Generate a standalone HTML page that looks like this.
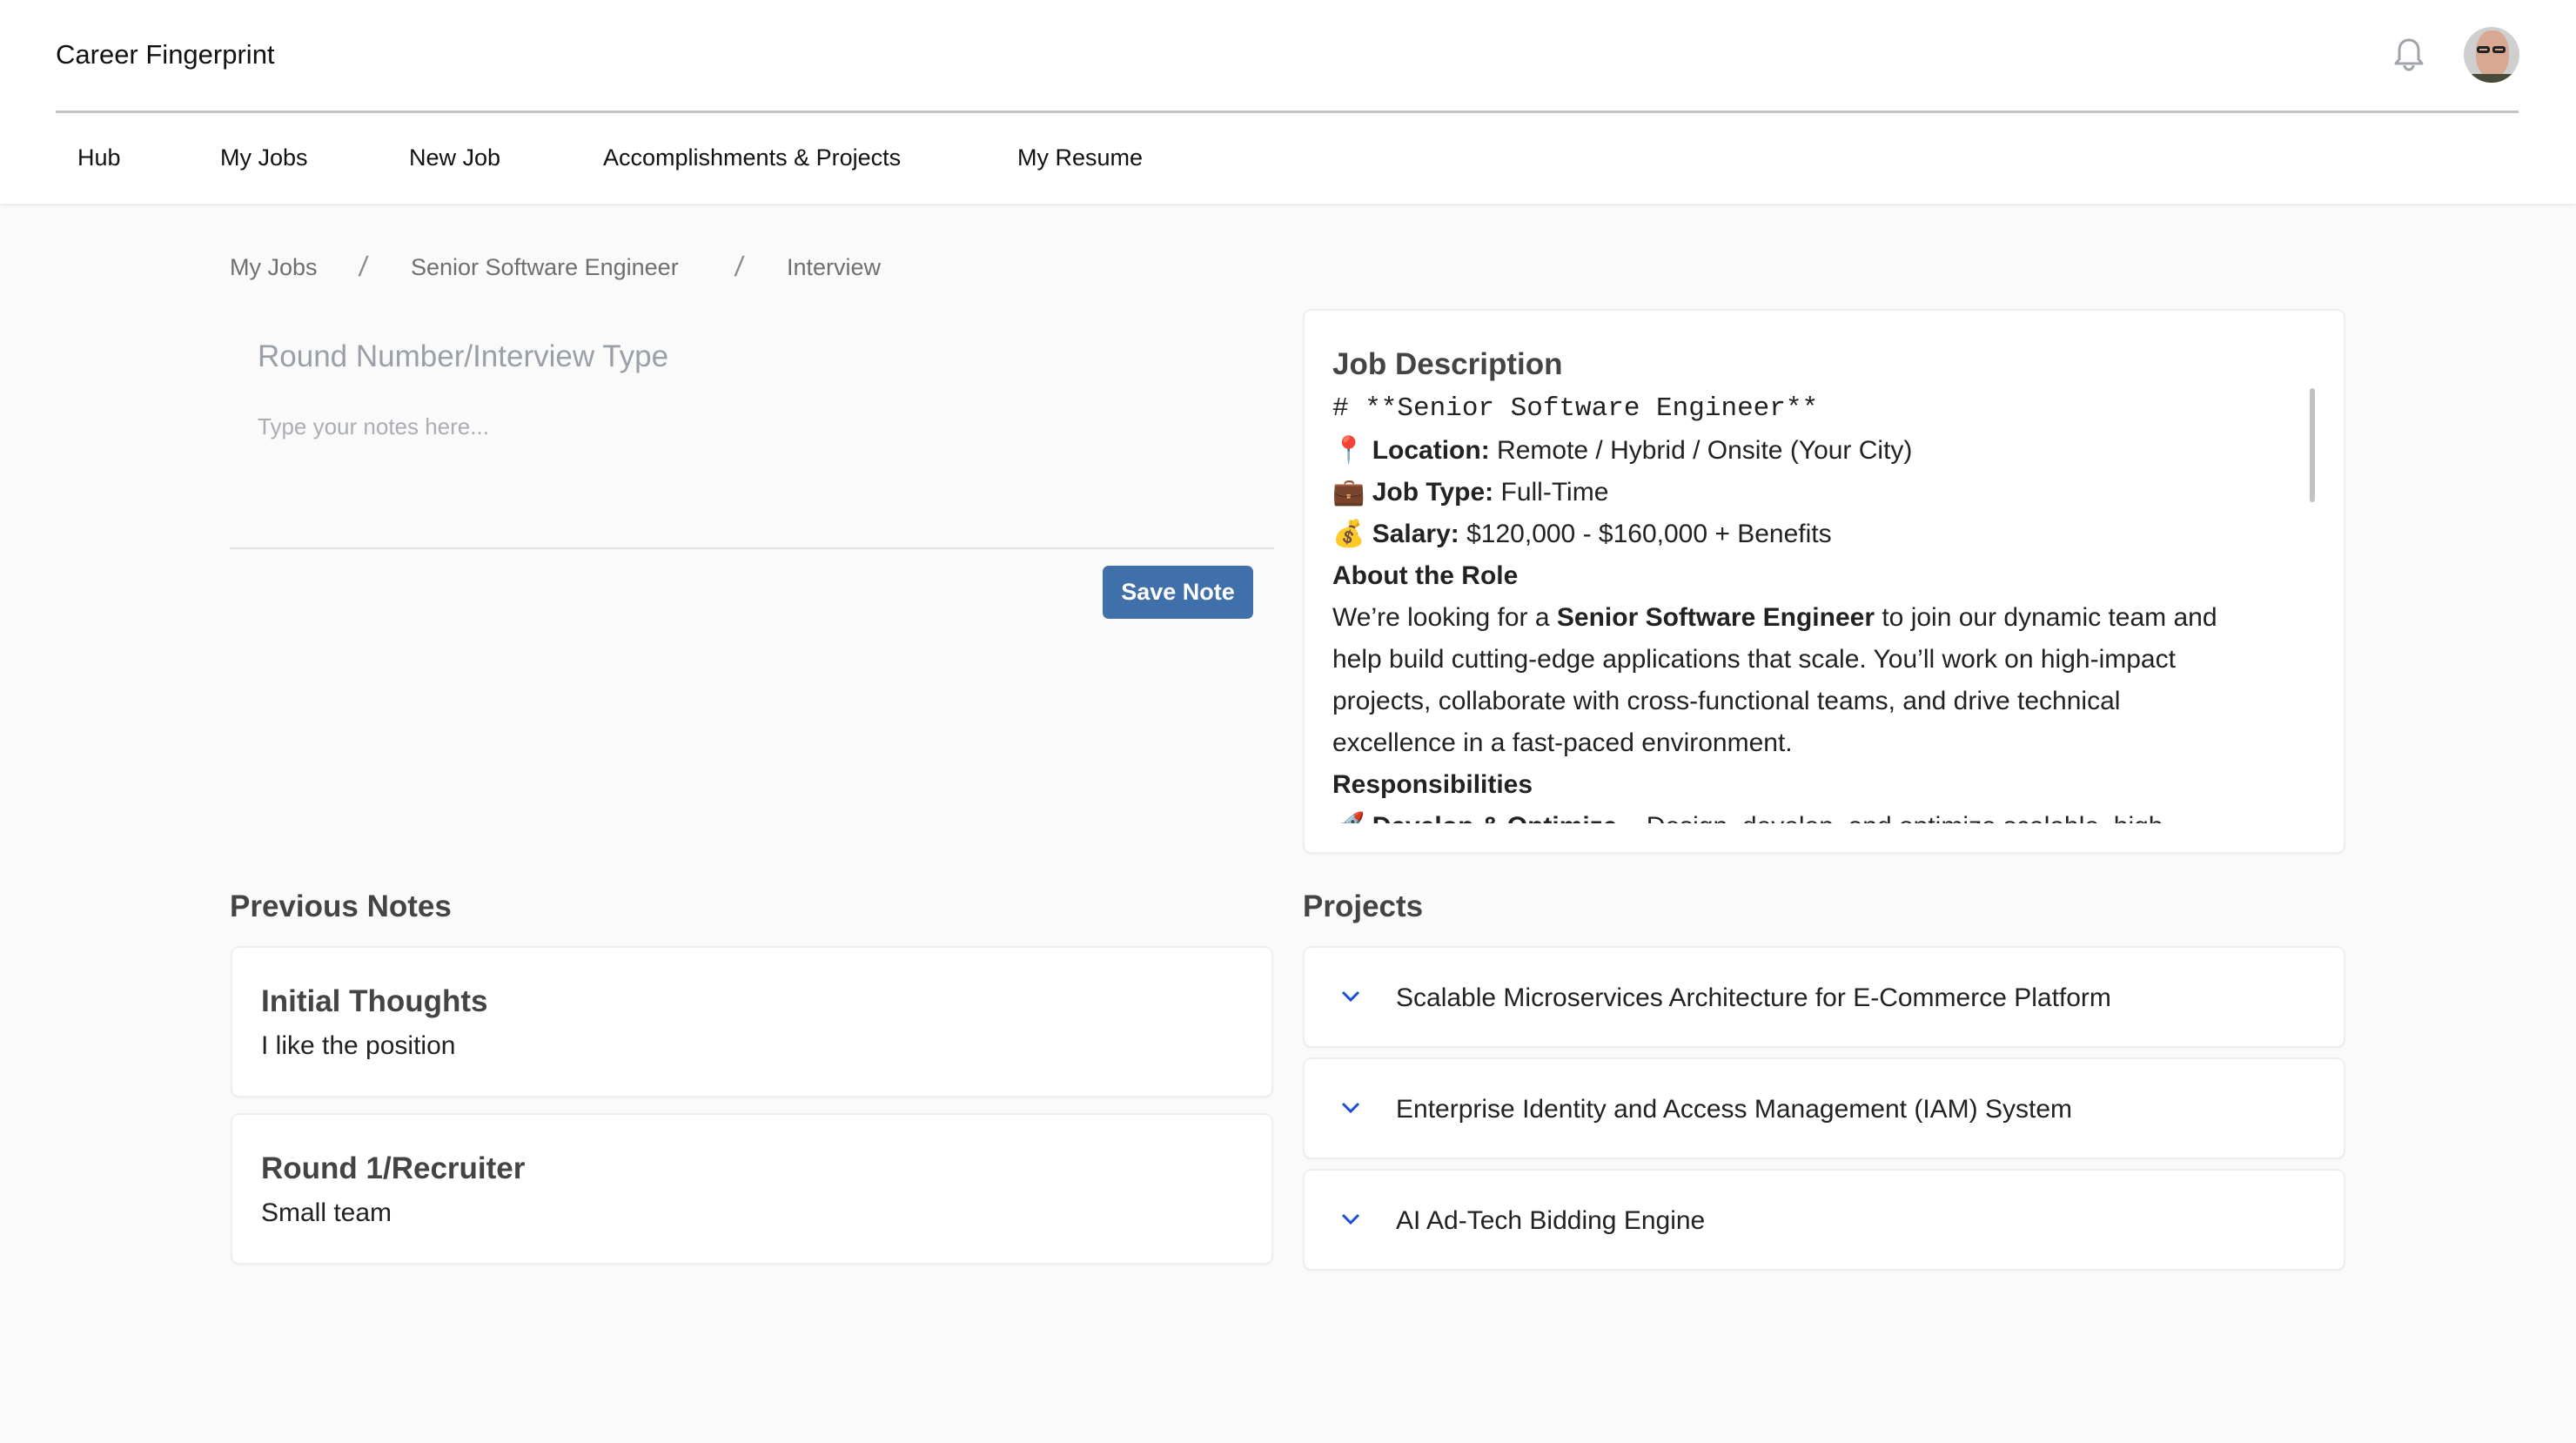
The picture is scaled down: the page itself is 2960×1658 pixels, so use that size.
<!DOCTYPE html>
<html><head><meta charset="utf-8"><style>
*{margin:0;padding:0;box-sizing:border-box}
body{width:2960px;height:1658px;background:#fafafa;font-family:"Liberation Sans",sans-serif;color:#222;position:relative;overflow:hidden}
.a{position:absolute;white-space:nowrap}
header{position:absolute;left:0;top:0;width:2960px;height:234px;background:#fff;box-shadow:0 2px 4px rgba(0,0,0,.08)}
.nav{font-size:27px;color:#111;top:166px}
.bc{font-size:27px;color:#6f6f6f;top:292px}
.sl{font-size:32px;color:#8a8a8a;top:288px;transform:skewX(-8deg)}
.card{position:absolute;background:#fff;border:2px solid #eeeeee;border-radius:10px;box-shadow:0 1px 2px rgba(0,0,0,.04)}
.jd{font-size:30px;line-height:48px;color:#222}
.jd b{font-weight:bold}
.pt{font-size:30px;color:#222}
</style></head><body>
<header>
<div class="a" style="left:64px;top:45px;font-size:31px;color:#111">Career Fingerprint</div>
<div class="a" style="left:64px;top:127px;width:2830px;height:3px;background:#c3c3c6"></div>
<div class="a nav" style="left:89px">Hub</div>
<div class="a nav" style="left:253px">My Jobs</div>
<div class="a nav" style="left:470px">New Job</div>
<div class="a nav" style="left:693px">Accomplishments &amp; Projects</div>
<div class="a nav" style="left:1169px">My Resume</div>
<svg class="a" style="left:2748px;top:42px" width="40" height="42" viewBox="0 0 40 42"><path d="M20 4c-7 0-11 5-11 12v10l-4 5h30l-4-5V16C31 9 27 4 20 4z" fill="none" stroke="#a0a4ab" stroke-width="3" stroke-linejoin="round"/><path d="M15 33a5 5 0 0 0 10 0" fill="none" stroke="#a0a4ab" stroke-width="3"/></svg>
<div class="a" style="left:2831px;top:31px;width:64px;height:64px;border-radius:50%;background:#cfcfcf;overflow:hidden">
<div style="position:absolute;left:14px;top:4px;width:38px;height:54px;border-radius:45%;background:#d9a892"></div>
<div style="position:absolute;left:15px;top:22px;width:15px;height:8px;border:3px solid #222;border-radius:3px"></div>
<div style="position:absolute;left:33px;top:22px;width:15px;height:8px;border:3px solid #222;border-radius:3px"></div>
<div style="position:absolute;left:8px;top:54px;width:48px;height:12px;background:#4a4a3a"></div></div>
</header>
<div class="a bc" style="left:264px">My Jobs</div>
<div class="a sl" style="left:413px">/</div>
<div class="a bc" style="left:472px">Senior Software Engineer</div>
<div class="a sl" style="left:845px">/</div>
<div class="a bc" style="left:904px">Interview</div>

<div class="a" style="left:296px;top:390px;font-size:35px;color:#9aa0a8">Round Number/Interview Type</div>
<div class="a" style="left:296px;top:475px;font-size:26px;color:#aaaeb4">Type your notes here...</div>
<div class="a" style="left:264px;top:629px;width:1200px;height:2px;background:#e2e2e2"></div>
<div class="a" style="left:1267px;top:650px;width:173px;height:61px;background:#4070aa;border-radius:7px;color:#fff;font-size:27px;font-weight:bold;text-align:center;line-height:61px">Save Note</div>

<div class="card" style="left:1497px;top:355px;width:1198px;height:626px">
<div class="a" style="left:32px;top:42px;font-size:35px;font-weight:bold;color:#444">Job Description</div>
<div class="a" style="left:32px;top:89px;width:1120px;height:500px;overflow:hidden" >
<div class="jd" style="font-family:'Liberation Mono',monospace;font-size:31px">#  **Senior Software Engineer**</div>
<div class="jd">📍 <b>Location:</b> Remote / Hybrid / Onsite (Your City)</div>
<div class="jd">💼 <b>Job Type:</b> Full-Time</div>
<div class="jd">💰 <b>Salary:</b> $120,000 - $160,000 + Benefits</div>
<div class="jd"><b>About the Role</b></div>
<div class="jd" style="white-space:normal;width:1020px">We’re looking for a <b>Senior Software Engineer</b> to join our dynamic team and help build cutting-edge applications that scale. You’ll work on high-impact projects, collaborate with cross-functional teams, and drive technical excellence in a fast&#8209;paced environment.</div>
<div class="jd"><b>Responsibilities</b></div>
<div class="jd">🚀 <b>Develop &amp; Optimize</b> – Design, develop, and optimize scalable, high</div>
</div>
<div class="a" style="left:1155px;top:89px;width:6px;height:131px;background:#c2c2c2;border-radius:3px"></div>
</div>

<div class="a" style="left:264px;top:1022px;font-size:35px;font-weight:bold;color:#444">Previous Notes</div>
<div class="card" style="left:265px;top:1087px;width:1198px;height:174px">
<div class="a" style="left:33px;top:42px;font-size:35px;font-weight:bold;color:#444">Initial Thoughts</div>
<div class="a" style="left:33px;top:96px;font-size:30px;color:#222">I like the position</div></div>
<div class="card" style="left:265px;top:1279px;width:1198px;height:174px">
<div class="a" style="left:33px;top:42px;font-size:35px;font-weight:bold;color:#444">Round 1/Recruiter</div>
<div class="a" style="left:33px;top:96px;font-size:30px;color:#222">Small team</div></div>

<div class="a" style="left:1497px;top:1022px;font-size:35px;font-weight:bold;color:#444">Projects</div>
<div class="card" style="left:1497px;top:1087px;width:1198px;height:117px"></div>
<div class="card" style="left:1497px;top:1215px;width:1198px;height:117px"></div>
<div class="card" style="left:1497px;top:1343px;width:1198px;height:117px"></div>
<svg class="a" style="left:1541px;top:1138px" width="22" height="14"><path d="M2 2l9 9 9-9" fill="none" stroke="#1d4ed8" stroke-width="3"/></svg>
<svg class="a" style="left:1541px;top:1266px" width="22" height="14"><path d="M2 2l9 9 9-9" fill="none" stroke="#1d4ed8" stroke-width="3"/></svg>
<svg class="a" style="left:1541px;top:1394px" width="22" height="14"><path d="M2 2l9 9 9-9" fill="none" stroke="#1d4ed8" stroke-width="3"/></svg>
<div class="a pt" style="left:1604px;top:1130px">Scalable Microservices Architecture for E-Commerce Platform</div>
<div class="a pt" style="left:1604px;top:1258px">Enterprise Identity and Access Management (IAM) System</div>
<div class="a pt" style="left:1604px;top:1386px">AI Ad-Tech Bidding Engine</div>
</body></html>
